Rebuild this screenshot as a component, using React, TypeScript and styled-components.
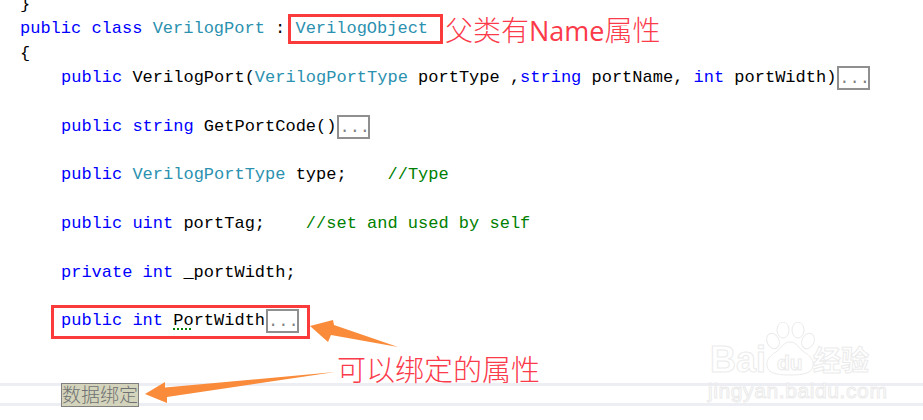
import React from 'react'
import styled, { createGlobalStyle } from 'styled-components'

const GlobalStyle = createGlobalStyle`
    html, body {
        margin: 0;
        padding: 0;
        background: #ffffff;
    }
`

const Page = styled.div`
    position: relative;
    width: 923px;
    height: 420px;
    overflow: hidden;
    background: #ffffff;
`

const Code = styled.div`
    display: flex;
    flex-direction: column;
    margin-top: -7px;
    padding-left: 20px;
    font-family: 'Liberation Mono', monospace;
    font-size: 17px;
    color: #000000;
`

const Line = styled.div<{ $indent?: boolean }>`
    height: 24.35px;
    line-height: 24.35px;
    white-space: pre;
    padding-left: ${(p) => (p.$indent ? '41px' : '0')};
`

const CurrentLine = styled.div`
    display: flex;
    align-items: flex-start;
    height: 17px;
    margin: 0 0 0 -20px;
    padding-left: 61px;
    border-top: 3px solid #ededf4;
    border-bottom: 3px solid #ededf4;
`

const Keyword = styled.span`
    color: #0000ff;
`

const TypeName = styled.span`
    color: #2b91af;
`

const Comment = styled.span`
    color: #008000;
`

const Squiggle = styled.span`
    text-decoration: underline dotted #008000 2px;
    text-underline-offset: 3px;
`

const Collapsed = styled.span`
    display: inline-block;
    width: 33px;
    height: 24px;
    margin-left: 1px;
    box-sizing: border-box;
    border: 2px solid #8f8f8f;
    color: #808080;
    line-height: 21px;
    vertical-align: top;
    text-align: center;
`

const Snippet = styled.span`
    display: inline-block;
    box-sizing: border-box;
    height: 24px;
    margin-top: -3px;
    padding: 0;
    border: 1px solid #808080;
    background: #d4d4bc;
    color: #6f7272;
    font-family: 'Noto Sans CJK SC', sans-serif;
    font-weight: 300;
    font-size: 19px;
    line-height: 20px;
`

const RedBox = styled.div<{ $x: number; $y: number; $w: number; $h: number }>`
    position: absolute;
    left: ${(p) => p.$x}px;
    top: ${(p) => p.$y}px;
    width: ${(p) => p.$w}px;
    height: ${(p) => p.$h}px;
    box-sizing: border-box;
    border: 3px solid #fb3a3c;
`

const Note = styled.div<{ $x: number; $y: number; $size: number }>`
    position: absolute;
    left: ${(p) => p.$x}px;
    top: ${(p) => p.$y}px;
    color: #fb3a4a;
    font-family: 'Noto Sans CJK SC', sans-serif;
    font-weight: 300;
    font-size: ${(p) => p.$size}px;
    line-height: 32px;
    white-space: nowrap;
`

const NoteLatin = styled.span`
    font-family: 'Open Sans', sans-serif;
    font-weight: 500;
    font-size: 27px;
`

const Arrows = styled.svg`
    position: absolute;
    left: 0;
    top: 0;
`

const Watermark = styled.div`
    position: absolute;
    left: 708px;
    top: 320px;
    width: 190px;
    height: 90px;
    color: #ffffff;
    -webkit-text-stroke: 1px #ebebeb;
`

const WatermarkBrand = styled.span`
    position: absolute;
    left: 2px;
    top: 20px;
    font-family: 'Liberation Sans', sans-serif;
    font-weight: 700;
    font-size: 36px;
    line-height: 40px;
`

const WatermarkCn = styled.span`
    position: absolute;
    left: 105px;
    top: 21px;
    font-family: 'Noto Sans CJK SC', sans-serif;
    font-weight: 700;
    font-size: 28px;
    line-height: 36px;
`

const WatermarkSite = styled.span`
    position: absolute;
    left: 0;
    top: 59px;
    font-family: 'Liberation Sans', sans-serif;
    font-size: 21px;
    line-height: 24px;
    letter-spacing: 0.6px;
`

const WatermarkDu = styled.span`
    position: absolute;
    left: 69px;
    top: 31px;
    font-family: 'Liberation Sans', sans-serif;
    font-weight: 700;
    font-size: 21px;
    line-height: 24px;
`

const Paw = styled.svg`
    position: absolute;
    left: 57px;
    top: 2px;
`

const App: React.FC = () => {
    return (
        <Page>
            <GlobalStyle />
            <Code>
                <Line>{'}'}</Line>
                <Line>
                    <Keyword>public class</Keyword> <TypeName>VerilogPort</TypeName> : <TypeName>VerilogObject</TypeName>
                </Line>
                <Line>{'{'}</Line>
                <Line $indent>
                    <Keyword>public</Keyword> VerilogPort(<TypeName>VerilogPortType</TypeName> portType ,<Keyword>string</Keyword> portName, <Keyword>int</Keyword> portWidth)<Collapsed>...</Collapsed>
                </Line>
                <Line />
                <Line $indent>
                    <Keyword>public string</Keyword> GetPortCode()<Collapsed>...</Collapsed>
                </Line>
                <Line />
                <Line $indent>
                    <Keyword>public</Keyword> <TypeName>VerilogPortType</TypeName> type;    <Comment>//Type</Comment>
                </Line>
                <Line />
                <Line $indent>
                    <Keyword>public uint</Keyword> portTag;    <Comment>//set and used by self</Comment>
                </Line>
                <Line />
                <Line $indent>
                    <Keyword>private int</Keyword> _portWidth;
                </Line>
                <Line />
                <Line $indent>
                    <Keyword>public int</Keyword> <Squiggle>Po</Squiggle>rtWidth<Collapsed>...</Collapsed>
                </Line>
                <Line />
                <Line />
                <CurrentLine>
                    <Snippet>数据绑定</Snippet>
                </CurrentLine>
            </Code>

            <RedBox $x={288} $y={14} $w={155} $h={30} />
            <RedBox $x={51} $y={305} $w={259} $h={34} />
            <Note $x={445} $y={13} $size={28}>父类有<NoteLatin>Name</NoteLatin>属性</Note>
            <Note $x={337} $y={352} $size={29}>可以绑定的属性</Note>

            <Arrows width="923" height="420" viewBox="0 0 923 420">
                <polygon points="310,326 333,320 334,325 398,347 331,335 328,342" fill="#f98b3a" />
                <polygon points="145,394 165,382 165,387.5 335,372 167,397 167,403" fill="#f98b3a" />
            </Arrows>

            <Watermark>
                <Paw width="50" height="56" viewBox="0 0 50 56" fill="#ffffff" stroke="#ebebeb" strokeWidth="1">
                    <ellipse cx="8" cy="19" rx="6" ry="8" transform="rotate(-25 8 19)" />
                    <ellipse cx="18" cy="8" rx="6" ry="8" />
                    <ellipse cx="33" cy="8" rx="6" ry="8" />
                    <ellipse cx="43" cy="19" rx="6" ry="8" transform="rotate(25 43 19)" />
                    <path d="M25 20c-7 0-8 6-14 10-7 4-10 9-9 14 1 7 9 9 23 9s22-2 23-9c1-5-2-10-9-14-6-4-7-10-14-10z" />
                </Paw>
                <WatermarkBrand>Bai</WatermarkBrand>
                <WatermarkDu>du</WatermarkDu>
                <WatermarkCn>经验</WatermarkCn>
                <WatermarkSite>jingyan.baidu.com</WatermarkSite>
            </Watermark>
        </Page>
    )
}

export default App
